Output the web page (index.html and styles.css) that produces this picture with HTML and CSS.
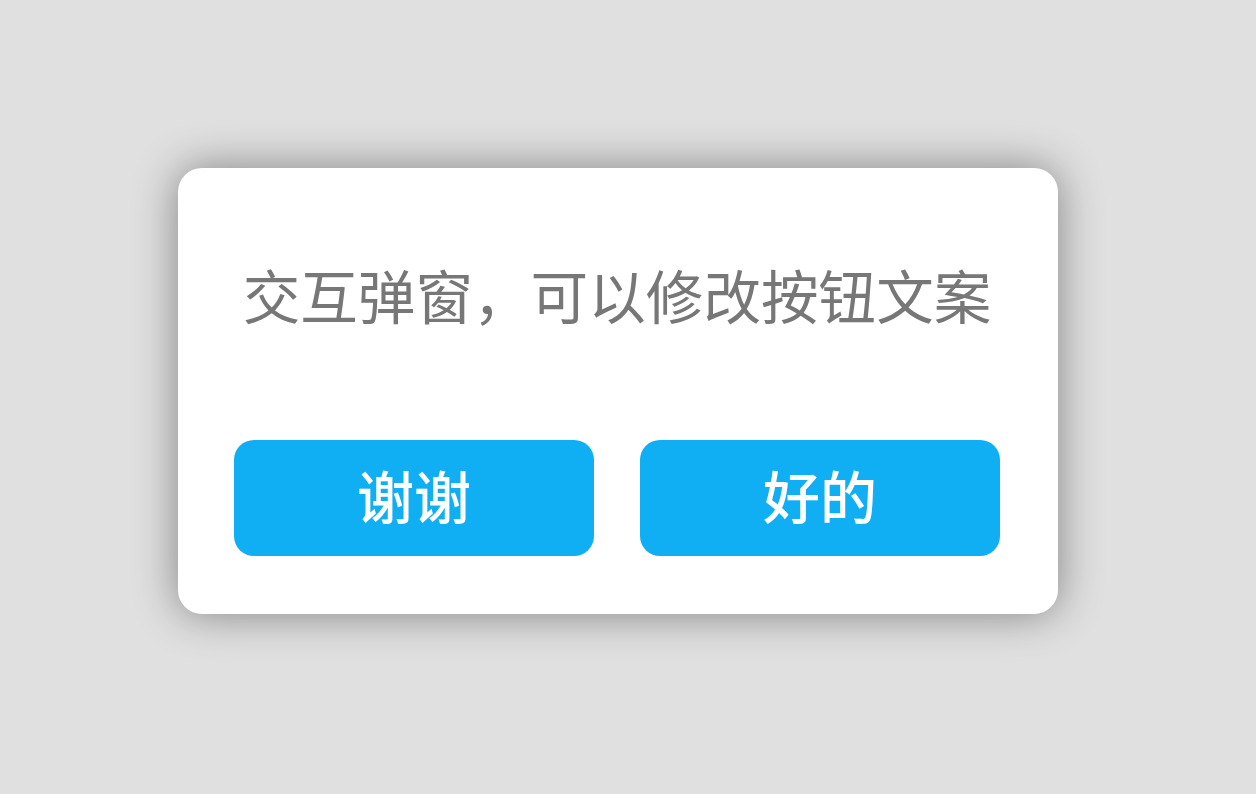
FILE: index.html
```html
<!DOCTYPE html>
<html lang="zh-CN">
<head>
<meta charset="utf-8">
<link rel="stylesheet" href="styles.css">
</head>
<body>
<div class="dialog">
  <div class="message">交互弹窗，可以修改按钮文案</div>
  <div class="actions">
    <button class="btn">谢谢</button>
    <button class="btn">好的</button>
  </div>
</div>
</body>
</html>
```
FILE: styles.css
```css
html, body {
  margin: 0;
  height: 100%;
}
body {
  background: #e0e0e0;
  font-family: "Noto Sans CJK SC", "Noto Sans", sans-serif;
  padding: 168px 0 0 178px;
  box-sizing: border-box;
}
.dialog {
  width: 880px;
  height: 446px;
  box-sizing: border-box;
  background: #fff;
  border-radius: 24px;
  box-shadow: 0 0 44px rgba(0, 0, 0, 0.42);
  display: flex;
  flex-direction: column;
  padding: 0 58px 58px 56px;
}
.message {
  flex: 1;
  display: flex;
  align-items: center;
  justify-content: center;
  color: #777;
  font-size: 57.6px;
  line-height: 1;
  padding-bottom: 18px;
}
.actions {
  display: flex;
  gap: 46px;
}
.btn {
  width: 360px;
  height: 116px;
  border: none;
  border-radius: 20px;
  background: #10aef2;
  color: #fff;
  font-family: inherit;
  font-size: 57px;
  font-weight: 500;
  line-height: 1;
  padding: 0 0 8px;
}
```
